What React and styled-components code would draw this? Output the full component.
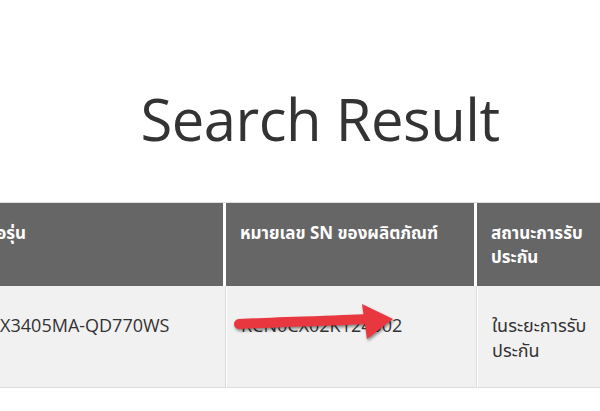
import React from "react";
import styled, { createGlobalStyle } from "styled-components";

const GlobalStyle = createGlobalStyle`
  html, body {
    margin: 0;
    padding: 0;
    background: #fff;
    overflow: hidden;
  }
  body {
    font-family: "Open Sans", "Noto Sans Thai", "Noto Sans", sans-serif;
    color: #333;
  }
`;

const Page = styled.div`
  width: 696px;
  margin-left: -28px;
  padding-top: 74px;
`;

const Title = styled.h1`
  margin: 0 0 38px;
  text-align: center;
  font-size: 58px;
  font-weight: 400;
  line-height: 90px;
  color: #333;
  letter-spacing: -0.5px;
`;

const Table = styled.table`
  width: 100%;
  table-layout: fixed;
  border-collapse: separate;
  border-spacing: 0;
  border-top: 1px solid #ddd;
`;

const HeadCell = styled.th`
  background: #666;
  color: #fff;
  text-align: left;
  vertical-align: top;
  font-size: 17px;
  font-weight: 700;
  line-height: 24px;
  padding: 18px 14px 15px;
  height: 50px;
  border-right: 3px solid #fff;
`;

const BodyCell = styled.td`
  position: relative;
  background: #f1f1f1;
  vertical-align: top;
  font-size: 18px;
  font-weight: 400;
  line-height: 25px;
  padding: 27px 14px 24px;
  height: 50px;
  border-right: 1px solid #ddd;
  border-left: 1px solid #fff;
  border-bottom: 1px solid #ddd;
`;

const Arrow = styled.svg`
  position: absolute;
  left: 2px;
  top: 15px;
  overflow: visible;
  filter: drop-shadow(1px 2px 1.5px rgba(0, 0, 0, 0.45));
`;

const columns = [
  { width: 254, label: "ชื่อรุ่น" },
  { width: 251, label: "หมายเลข SN ของผลิตภัณฑ์" },
  { width: 150, label: "สถานะการรับประกัน" },
  { width: 41, label: "" },
];

const row = ["UX3405MA-QD770WS", "RCN0CX02K124502", "ในระยะการรับประกัน", ""];

export default function App() {
  return (
    <>
      <GlobalStyle />
      <Page>
        <Title>Search Result</Title>
        <Table>
          <colgroup>
            {columns.map((c, i) => (
              <col key={i} style={{ width: c.width }} />
            ))}
          </colgroup>
          <thead>
            <tr>
              {columns.map((c, i) => (
                <HeadCell key={i}>{c.label}</HeadCell>
              ))}
            </tr>
          </thead>
          <tbody>
            <tr>
              {row.map((v, i) => (
                <BodyCell key={i}>
                  {v}
                  {i === 1 && (
                    <Arrow width="170" height="45" viewBox="0 0 170 45">
                      <path
                        d="M10 23 C 50 21, 100 20, 140 18"
                        stroke="#e8373e"
                        strokeWidth="10"
                        strokeLinecap="round"
                        fill="none"
                      />
                      <path d="M133 3 L164 18 L138 38 Z" fill="#e8373e" />
                    </Arrow>
                  )}
                </BodyCell>
              ))}
            </tr>
          </tbody>
        </Table>
      </Page>
    </>
  );
}
